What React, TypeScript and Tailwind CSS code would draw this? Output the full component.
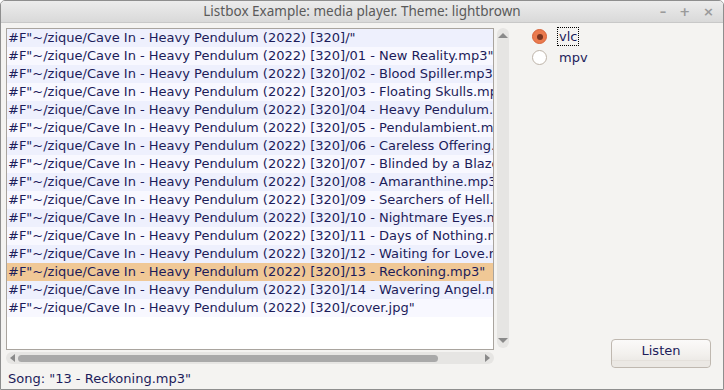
import { useState } from "react";

const BASE = '#F"~/zique/Cave In - Heavy Pendulum (2022) [320]/';
const FILES = [
  "",
  "01 - New Reality.mp3",
  "02 - Blood Spiller.mp3",
  "03 - Floating Skulls.mp3",
  "04 - Heavy Pendulum.mp3",
  "05 - Pendulambient.mp3",
  "06 - Careless Offering.mp3",
  "07 - Blinded by a Blaze.mp3",
  "08 - Amaranthine.mp3",
  "09 - Searchers of Hell.mp3",
  "10 - Nightmare Eyes.mp3",
  "11 - Days of Nothing.mp3",
  "12 - Waiting for Love.mp3",
  "13 - Reckoning.mp3",
  "14 - Wavering Angel.mp3",
  "cover.jpg",
];

const font = { fontFamily: '"DejaVu Sans", sans-serif' };

function Radio({ label, checked, focused }: { label: string; checked: boolean; focused?: boolean }) {
  return (
    <div className="flex items-center h-[21px]">
      <div className="w-[46px] flex justify-end pr-[11px]">
        {checked ? (
          <div className="w-[15px] h-[15px] rounded-full bg-[#ea7a4e] border border-[#d8643a] flex items-center justify-center">
            <div className="w-[6px] h-[6px] rounded-full bg-[#7a3520]" />
          </div>
        ) : (
          <div className="w-[15px] h-[15px] rounded-full bg-white border border-[#bdb3a8]" />
        )}
      </div>
      <span
        className={`text-[13px] leading-[17px] text-[#1c1c5a] px-[1px] ${
          focused ? "outline outline-1 outline-dotted outline-black" : ""
        }`}
      >
        {label}
      </span>
    </div>
  );
}

export default function App() {
  const [selected] = useState(13);

  return (
    <div
      className="w-[724px] h-[390px] flex flex-col bg-[#f4f3f1] border border-[#8e8e8e] rounded-t-[5px] overflow-hidden"
      style={font}
    >
      <div className="h-[22px] shrink-0 flex items-center bg-gradient-to-b from-[#ececec] to-[#d9d9d9] border-b border-[#c8c8c8]">
        <div className="w-[70px]" />
        <div
          className="flex-1 text-center text-[13.5px] text-[#5a5a5a]"
          style={{ fontFamily: '"Noto Sans", sans-serif' }}
        >
          Listbox Example: media player. Theme: lightbrown
        </div>
        <div className="w-[70px] flex items-center justify-end gap-[13px] pr-[9px] text-[#9a9a9a] text-[13px] font-bold">
          <span>–</span>
          <span>+</span>
          <span>×</span>
        </div>
      </div>

      <div className="flex-1 flex flex-col px-[5px] pt-[5px]">
        <div className="flex">
          <div className="flex flex-col w-[488px]">
            <div className="h-[322px] border border-[#a9a49e] bg-white overflow-hidden">
              {FILES.map((f, i) => (
                <div
                  key={i}
                  className={`h-[18px] leading-[18px] text-[13px] whitespace-nowrap pl-[1px] text-[#1c1c5a] ${
                    i === selected ? "bg-[#f0c896]" : i % 2 === 0 ? "bg-[#eef0fd]" : "bg-[#f8f8ff]"
                  }`}
                >
                  {BASE + f + '"'}
                </div>
              ))}
            </div>
            <div className="h-[12px] mt-[2px] rounded-full bg-[#e6e5e3] flex items-center px-[4px] gap-[3px]">
              <div className="w-0 h-0 border-y-[4px] border-y-transparent border-r-[5px] border-r-[#8a8a8a]" />
              <div className="w-[420px] h-[7px] rounded-full bg-[#a9a9a9]" />
              <div className="flex-1" />
              <div className="w-0 h-0 border-y-[4px] border-y-transparent border-l-[5px] border-l-[#8a8a8a]" />
            </div>
          </div>
          <div className="ml-[3px] w-[12px] h-[320px] rounded-full bg-[#e6e5e3] flex flex-col items-center justify-between py-[5px]">
            <div className="w-0 h-0 border-x-[5px] border-x-transparent border-b-[5px] border-b-[#8a8a8a]" />
            <div className="w-0 h-0 border-x-[5px] border-x-transparent border-t-[5px] border-t-[#8a8a8a]" />
          </div>
          <div className="flex-1 flex flex-col justify-between -mb-[4px]">
            <div className="-mt-[2px] pl-[3px]">
              <Radio label="vlc" checked focused />
              <Radio label="mpv" checked={false} />
            </div>
            <div className="flex justify-end pr-[7px]">
              <button className="w-[100px] h-[29px] rounded-[4px] border border-[#bfb8b0] bg-gradient-to-b from-[#fbfaf9] via-[#f3f1ee] to-[#e6e3df] text-[13px] text-[#1c1c5a] leading-[24px] flex flex-col items-center">
                <span className="h-[20px] leading-[22px]">Listen</span>
                <span className="w-full flex-1 border-t border-[#e4e0db] rounded-b-[4px] bg-[#ebe8e4]" />
              </button>
            </div>
          </div>
        </div>
        <div className="mt-[6px] text-[13px] leading-[18px] text-[#1c1c5a] pl-[2px]">
          Song: "13 - Reckoning.mp3"
        </div>
      </div>
    </div>
  );
}
